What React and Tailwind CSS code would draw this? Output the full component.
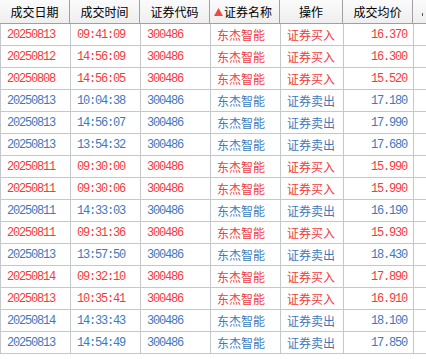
import React from "react";

const rows = [
  ["20250813", "09:41:09", "买入", "16.370"],
  ["20250812", "14:56:09", "买入", "16.300"],
  ["20250808", "14:56:05", "买入", "15.520"],
  ["20250813", "10:04:38", "卖出", "17.180"],
  ["20250813", "14:56:07", "卖出", "17.990"],
  ["20250813", "13:54:32", "卖出", "17.680"],
  ["20250811", "09:30:00", "买入", "15.990"],
  ["20250811", "09:30:06", "买入", "15.990"],
  ["20250811", "14:33:03", "卖出", "16.190"],
  ["20250811", "09:31:36", "买入", "15.930"],
  ["20250813", "13:57:50", "卖出", "18.430"],
  ["20250814", "09:32:10", "买入", "17.890"],
  ["20250813", "10:35:41", "买入", "16.910"],
  ["20250814", "14:33:43", "卖出", "18.100"],
  ["20250813", "14:54:49", "卖出", "17.850"],
];

const hcell =
  "shrink-0 h-full flex items-center justify-center text-[12px] text-black border-r border-[#a0a0a0] whitespace-nowrap font-['Noto_Sans_CJK_SC','Noto_Sans',sans-serif]";
const numcell =
  "w-[70px] shrink-0 border-r border-[#c4c8cc] flex items-center pl-[6px] text-[12px] tracking-[-1.2px] font-['Liberation_Mono','DejaVu_Sans_Mono',monospace]";
const cjkcell =
  "shrink-0 border-r border-[#c4c8cc] flex items-center pl-[6px] text-[12px] font-['Noto_Sans_CJK_SC','Noto_Sans',sans-serif]";

export default function App() {
  return (
    <div className="w-[426px] h-[359px] overflow-hidden bg-white">
      <div className="w-[500px]">
        <div className="flex h-[24px] bg-gradient-to-b from-[#fbfbfb] to-[#eeeeee] border-b border-[#a0a0a0]">
          <div className={`w-[70px] ${hcell}`}>成交日期</div>
          <div className={`w-[70px] ${hcell}`}>成交时间</div>
          <div className={`w-[70px] ${hcell}`}>证券代码</div>
          <div className={`w-[70px] ${hcell} justify-start pl-[4px]`}>
            <svg width="9" height="8" viewBox="0 0 9 8" className="mr-[1px]">
              <polygon points="4.5,0 9,8 0,8" fill="#f04848" />
            </svg>
            证券名称
          </div>
          <div className={`w-[63px] ${hcell}`}>操作</div>
          <div className={`w-[70px] ${hcell}`}>成交均价</div>
          <div className="w-[70px] shrink-0 h-full flex items-end pl-[9px] pb-[7px]">
            <div className="w-[1px] h-[3px] bg-[#555]"></div>
          </div>
        </div>
        {rows.map((r, i) => {
          const buy = r[2] === "买入";
          const c = buy ? "text-[#f23b3b]" : "text-[#3b7bbd]";
          return (
            <div key={i} className={`flex h-[22px] border-b border-[#c4c8cc] border-l ${c}`}>
              <div className={numcell}>{r[0]}</div>
              <div className={numcell}>{r[1]}</div>
              <div className={numcell}>300486</div>
              <div className={`w-[70px] ${cjkcell}`}>东杰智能</div>
              <div className={`w-[63px] ${cjkcell}`}>{buy ? "证券买入" : "证券卖出"}</div>
              <div className={`${numcell} justify-end pl-0 pr-[6px]`}>{r[3]}</div>
              <div className="w-[70px] shrink-0 border-r border-[#c4c8cc]"></div>
            </div>
          );
        })}
      </div>
    </div>
  );
}
